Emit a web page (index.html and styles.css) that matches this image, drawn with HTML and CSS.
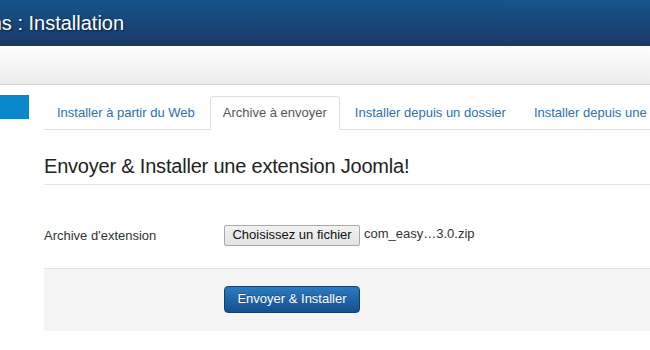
FILE: index.html
```html
<!DOCTYPE html>
<html lang="fr">
<head>
<meta charset="utf-8">
<title>Extensions : Installation</title>
<link rel="stylesheet" href="styles.css">
</head>
<body>
<header class="header">
  <h1 class="page-title">Extensions : Installation</h1>
</header>
<div class="toolbar"></div>
<div class="container">
  <aside class="sidebar">
    <div class="side-item active"></div>
  </aside>
  <main class="main">
    <ul class="tabs">
      <li class="tab"><a>Installer à partir du Web</a></li>
      <li class="tab active"><a>Archive à envoyer</a></li>
      <li class="tab"><a>Installer depuis un dossier</a></li>
      <li class="tab"><a>Installer depuis une URL</a></li>
    </ul>
    <h2 class="legend">Envoyer &amp; Installer une extension Joomla!</h2>
    <div class="control-group">
      <label class="control-label">Archive d'extension</label>
      <div class="controls">
        <button class="file-btn" type="button">Choisissez un fichier</button>
        <span class="file-name">com_easy…3.0.zip</span>
      </div>
    </div>
    <div class="form-actions">
      <button class="btn-primary" type="button">Envoyer &amp; Installer</button>
    </div>
  </main>
</div>
</body>
</html>
```

FILE: styles.css
```css
html, body {
  margin: 0;
  padding: 0;
}
body {
  width: 650px;
  height: 350px;
  overflow: hidden;
  background: #fff;
  font-family: "Liberation Sans", Arial, sans-serif;
  font-size: 13px;
  color: #333;
}
.header {
  height: 46px;
  background: linear-gradient(#16548b, #1b3968);
  overflow: hidden;
  white-space: nowrap;
}
.page-title {
  margin: 0 0 0 -86px;
  font-size: 20px;
  font-weight: normal;
  line-height: 46px;
  color: #fff;
  text-shadow: 1px 1px 2px rgba(0, 0, 0, 0.6);
}
.toolbar {
  height: 38px;
  background: linear-gradient(#ffffff, #ececec);
  border-bottom: 1px solid #d0d0d0;
}
.container {
  display: flex;
  gap: 15px;
  padding-top: 10px;
  white-space: nowrap;
}
.sidebar {
  width: 29px;
  flex: none;
}
.side-item {
  height: 24px;
}
.side-item.active {
  background: #0a86cb;
}
.main {
  flex: 1;
  min-width: 0;
  padding-top: 1px;
}
.tabs {
  display: flex;
  margin: 0 0 19px;
  padding: 0;
  list-style: none;
  border-bottom: 1px solid #ddd;
}
.tab {
  margin-right: 2px;
  margin-bottom: -1px;
  flex: none;
}
.tab a {
  display: block;
  padding: 8px 12px;
  line-height: 16px;
  border: 1px solid transparent;
  border-radius: 4px 4px 0 0;
  color: #2f6fa7;
}
.tab.active a {
  background: #fff;
  color: #555;
  border-color: #ddd #ddd transparent;
}
.legend {
  margin: 0 0 40px;
  font-size: 20px;
  letter-spacing: -0.2px;
  font-weight: normal;
  line-height: 35px;
  color: #222;
  border-bottom: 1px solid #e5e5e5;
}
.control-group {
  display: flex;
  align-items: flex-start;
  height: 21px;
  margin-bottom: 22px;
}
.control-label {
  width: 180px;
  flex: none;
  line-height: 21px;
  color: #333;
}
.controls {
  display: flex;
  align-items: flex-start;
}
.file-btn {
  height: 21px;
  width: 136px;
  box-sizing: border-box;
  padding: 0 0 2px;
  margin: 0;
  font-family: "Liberation Sans", Arial, sans-serif;
  font-size: 13px;
  line-height: 17px;
  color: #111;
  background: linear-gradient(#f2f2f2, #e3e3e3);
  border: 1px solid #a9a9a9;
  border-radius: 2px;
}
.file-name {
  margin-left: 4px;
  line-height: 18px;
  color: #333;
}
.form-actions {
  border-top: 1px solid #e5e5e5;
  background: #f5f5f5;
  padding: 17px 0 18px 180px;
}
.btn-primary {
  height: 27px;
  width: 136px;
  box-sizing: border-box;
  padding: 0 0 1px;
  margin: 0;
  font-family: "Liberation Sans", Arial, sans-serif;
  font-size: 13px;
  line-height: 24px;
  color: #fff;
  text-shadow: 0 -1px 0 rgba(0, 0, 0, 0.25);
  background: linear-gradient(#2a7bc2, #15508f);
  border: 1px solid #0f3f75;
  border-radius: 4px;
}
```
